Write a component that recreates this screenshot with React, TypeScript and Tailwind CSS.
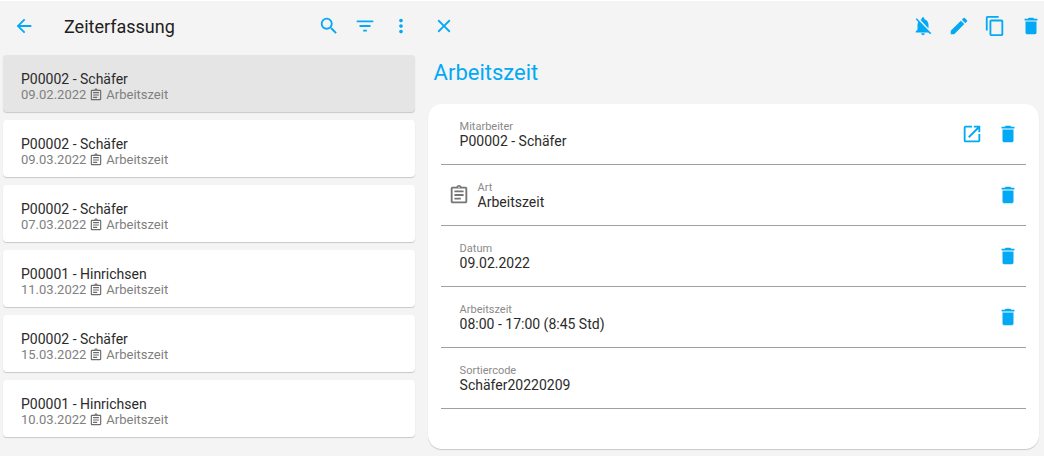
import type { ReactNode } from "react";
import {
  MdArrowBack,
  MdClose,
  MdContentCopy,
  MdDelete,
  MdEdit,
  MdFilterList,
  MdMoreVert,
  MdNotificationsOff,
  MdOpenInNew,
  MdOutlineAssignment,
  MdSearch,
} from "react-icons/md";

type Entry = { name: string; date: string; kind: string };

const entries: Entry[] = [
  { name: "P00002 - Schäfer", date: "09.02.2022", kind: "Arbeitszeit" },
  { name: "P00002 - Schäfer", date: "09.03.2022", kind: "Arbeitszeit" },
  { name: "P00002 - Schäfer", date: "07.03.2022", kind: "Arbeitszeit" },
  { name: "P00001 - Hinrichsen", date: "11.03.2022", kind: "Arbeitszeit" },
  { name: "P00002 - Schäfer", date: "15.03.2022", kind: "Arbeitszeit" },
  { name: "P00001 - Hinrichsen", date: "10.03.2022", kind: "Arbeitszeit" },
];

function IconButton({ label, children }: { label: string; children: ReactNode }) {
  return (
    <button type="button" aria-label={label} className="shrink-0 cursor-pointer text-[22px] text-[#03a9f4]">
      {children}
    </button>
  );
}

function ListEntry({ entry, selected }: { entry: Entry; selected: boolean }) {
  return (
    <li>
      <button
        type="button"
        aria-pressed={selected}
        className={`flex h-[57px] w-full cursor-pointer flex-col justify-center rounded px-[18px] pt-[6px] text-left shadow-[0_1px_1px_rgba(0,0,0,0.18)] ${
          selected ? "bg-[#e5e5e5]" : "bg-white"
        }`}
      >
        <span className="text-[14px] leading-4 text-[#2b2b2b]">{entry.name}</span>
        <span className="flex items-center gap-[3px] text-[13px] leading-4 text-[#808080]">
          {entry.date}
          <MdOutlineAssignment className="text-[14px] text-[#6b6b6b]" />
          {entry.kind}
        </span>
      </button>
    </li>
  );
}

type FieldProps = { label: string; value: string; icon?: ReactNode; children?: ReactNode };

function Field({ label, value, icon, children }: FieldProps) {
  return (
    <div className={`flex h-[61px] items-center border-b border-[#a0a0a0] pr-[7px] ${icon ? "pl-[7px]" : "pl-[19px]"}`}>
      {icon && <span className="mr-2 text-[22px] text-[#757575]">{icon}</span>}
      <dl className="min-w-0 flex-1">
        <dt className="text-[11px] leading-[14px] text-[#8a8a8a]">{label}</dt>
        <dd className="text-[14px] leading-[14px] text-[#2b2b2b]">{value}</dd>
      </dl>
      <div className="flex gap-[14px]">{children}</div>
    </div>
  );
}

const removeButton = (
  <IconButton label="Wert löschen">
    <MdDelete />
  </IconButton>
);

export default function App() {
  return (
    <div className="flex min-h-screen border-t border-white bg-[#f4f4f4] font-[Roboto,sans-serif]">
      <section className="w-2/5 shrink-0">
        <header className="flex h-[54px] items-center gap-[14px] pr-[6px] pb-[5px] pl-[13px]">
          <IconButton label="Zurück">
            <MdArrowBack />
          </IconButton>
          <h1 className="flex-1 pt-[2px] pl-[15px] text-[18px] text-[#212121]">Zeiterfassung</h1>
          <IconButton label="Suchen">
            <MdSearch />
          </IconButton>
          <IconButton label="Filtern">
            <MdFilterList />
          </IconButton>
          <IconButton label="Mehr">
            <MdMoreVert />
          </IconButton>
        </header>
        <ul className="flex flex-col gap-2 px-[3px]">
          {entries.map((entry, index) => (
            <ListEntry key={entry.date} entry={entry} selected={index === 0} />
          ))}
        </ul>
      </section>

      <section className="min-w-0 flex-1 pr-[5px] pl-[10px]">
        <header className="-mr-[3px] flex h-[54px] items-center gap-[14px] pb-[5px] pl-[5px]">
          <IconButton label="Schließen">
            <MdClose />
          </IconButton>
          <span className="flex-1" />
          <IconButton label="Benachrichtigungen aus">
            <MdNotificationsOff />
          </IconButton>
          <IconButton label="Bearbeiten">
            <MdEdit />
          </IconButton>
          <IconButton label="Kopieren">
            <MdContentCopy />
          </IconButton>
          <IconButton label="Löschen">
            <MdDelete />
          </IconButton>
        </header>
        <h2 className="h-[49px] pl-[6px] text-[22px] leading-9 text-[#03a9f4]">Arbeitszeit</h2>
        <div className="rounded-[14px] bg-white px-[13px] pb-10 shadow-[0_1px_1px_rgba(0,0,0,0.18)]">
          <Field label="Mitarbeiter" value="P00002 - Schäfer">
            <IconButton label="Mitarbeiter öffnen">
              <MdOpenInNew />
            </IconButton>
            {removeButton}
          </Field>
          <Field label="Art" value="Arbeitszeit" icon={<MdOutlineAssignment />}>
            {removeButton}
          </Field>
          <Field label="Datum" value="09.02.2022">
            {removeButton}
          </Field>
          <Field label="Arbeitszeit" value="08:00 - 17:00 (8:45 Std)">
            {removeButton}
          </Field>
          <Field label="Sortiercode" value="Schäfer20220209" />
        </div>
      </section>
    </div>
  );
}
